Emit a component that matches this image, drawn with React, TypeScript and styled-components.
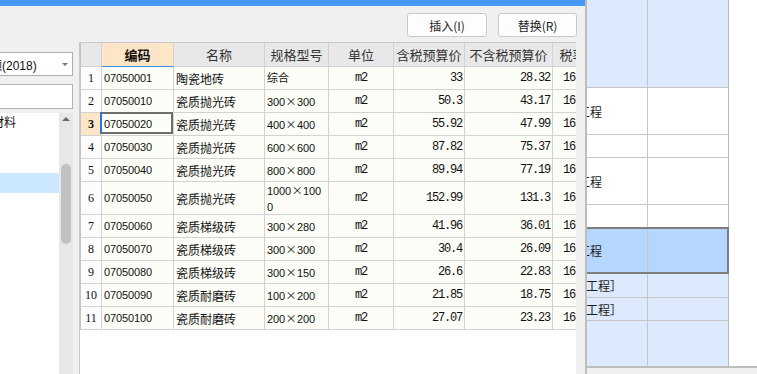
import React from 'react';
import styled, { createGlobalStyle, css } from 'styled-components';

const GlobalStyle = createGlobalStyle`
  html, body { margin: 0; padding: 0; }
  body {
    width: 757px;
    height: 374px;
    overflow: hidden;
    background: #ffffff;
    font-family: "Noto Sans CJK SC", "Liberation Sans", sans-serif;
  }
`;

const CJK = `"Noto Sans CJK SC", sans-serif`;
const SANS = `"Liberation Sans", "Noto Sans CJK SC", sans-serif`;
const MONO = `"Liberation Mono", "Noto Sans CJK SC", monospace`;

const Screen = styled.div`
  position: relative;
  width: 757px;
  height: 374px;
  overflow: hidden;
  background: #ffffff;
`;

/* ---------- background application (behind the dialog) ---------- */
const BackApp = styled.div`
  display: flex;
  flex-direction: column;
  height: 100%;
`;

const BackGrid = styled.div`
  display: flex;
  height: 366px;
  flex: none;
`;

const BackHidden = styled.div`
  width: 540px;
  flex: none;
`;

const BackTable = styled.div`
  width: 189px;
  flex: none;
  display: flex;
  flex-direction: column;
`;

type Tone = 'blue' | 'white' | 'sel';
const toneBg: Record<Tone, string> = { blue: '#dde9fc', white: '#ffffff', sel: '#b5d6fe' };

const BackRow = styled.div<{ $h: number; $tone: Tone; $line?: boolean }>`
  display: flex;
  box-sizing: border-box;
  height: ${p => p.$h}px;
  background: ${p => toneBg[p.$tone]};
  border-bottom: ${p => (p.$line ? '1px solid #c6c6c6' : 'none')};
  ${p =>
    p.$tone === 'sel' &&
    css`
      border-top: 2px solid #7d7d7d;
      border-bottom: 2px solid #7d7d7d;
      border-right: 2px solid #7d7d7d;
    `}
`;

const BackCellA = styled.div<{ $indent: number }>`
  width: 108px;
  box-sizing: border-box;
  border-right: 1px solid #c6c6c6;
  display: flex;
  align-items: center;
  padding-left: ${p => p.$indent}px;
  font: 12px ${CJK};
  color: #1b1b1b;
  white-space: nowrap;
  overflow: hidden;
`;

const BackCellB = styled.div<{ $last?: boolean }>`
  flex: 1;
  box-sizing: border-box;
  border-right: ${p => (p.$last ? 'none' : '1px solid #b9b9b9')};
`;

const BackStatus = styled.div`
  flex: 1;
  border-top: 2px solid #bdbdbd;
  background: #f0f0f0;
`;

/* ---------- dialog ---------- */
const Dialog = styled.div`
  position: absolute;
  top: 0;
  left: -130px;
  width: 717px;
  height: 400px;
  box-sizing: border-box;
  background: #f0f0f0;
  border-right: 2px solid #bdbdbd;
  display: flex;
  flex-direction: column;
`;

const TitleBar = styled.div`
  height: 6px;
  flex: none;
  background: #4599f5;
`;

const Toolbar = styled.div`
  height: 36px;
  flex: none;
  box-sizing: border-box;
  display: flex;
  justify-content: flex-end;
  align-items: flex-start;
  gap: 11px;
  padding: 7px 8px 0 0;
`;

const Button = styled.button<{ $w: number }>`
  width: ${p => p.$w}px;
  height: 24px;
  box-sizing: border-box;
  border: 1px solid #c9c9c9;
  border-radius: 3px;
  background: #fdfdfd;
  font: 12px ${CJK};
  color: #222;
  padding: 0;
  display: flex;
  align-items: center;
  justify-content: center;
`;

const Body = styled.div`
  flex: 1;
  display: flex;
  gap: 6px;
  padding-right: 9px;
  min-height: 0;
`;

const LeftPanel = styled.div`
  width: 203px;
  flex: none;
  display: flex;
  flex-direction: column;
`;

const Select = styled.div`
  margin-top: 10px;
  height: 24px;
  box-sizing: border-box;
  border: 1px solid #adadad;
  background: #fff;
  display: flex;
  align-items: center;
  padding-left: 11px;
  font: 12px ${SANS};
  color: #111;
  white-space: nowrap;
  overflow: hidden;
`;

const SelectText = styled.span`
  flex: 1;
  overflow: hidden;
`;

const Caret = styled.span`
  width: 0;
  height: 0;
  border-left: 3px solid transparent;
  border-right: 3px solid transparent;
  border-top: 3px solid #767676;
  margin: 0 4px 0 4px;
  flex: none;
`;

const SearchBox = styled.div`
  margin-top: 8px;
  height: 25px;
  box-sizing: border-box;
  border: 1px solid #b2b2b2;
  background: #fff;
`;

const ListWrap = styled.div`
  margin-top: 4px;
  flex: 1;
  display: flex;
  min-height: 0;
`;

const TreeList = styled.div`
  flex: 1;
  background: #fff;
  overflow: hidden;
`;

const TreeItem = styled.div<{ $indent: number; $selected?: boolean }>`
  height: 20px;
  line-height: 20px;
  padding-left: ${p => p.$indent}px;
  background: ${p => (p.$selected ? '#cce8ff' : 'transparent')};
  font: 12px ${CJK};
  color: #111;
  white-space: nowrap;
`;

const ScrollTrack = styled.div`
  width: 14px;
  flex: none;
  background: #e7e7e7;
  display: flex;
  flex-direction: column;
  align-items: center;
`;

const ScrollArrow = styled.span`
  margin-top: 4px;
  width: 0;
  height: 0;
  border-left: 4px solid transparent;
  border-right: 4px solid transparent;
  border-bottom: 4px solid #6a6a6a;
`;

const ScrollThumb = styled.div`
  margin-top: 43px;
  width: 10px;
  height: 80px;
  border-radius: 5px;
  background: #c1c1c1;
`;

const TablePanel = styled.div`
  width: 497px;
  flex: none;
  box-sizing: border-box;
  border-left: 1px solid #c9c9c9;
  border-top: 1px solid #c9c9c9;
  background: #ffffff;
  overflow: hidden;
`;

const COLS = '22px 72px 91px 64px 65px 71px 88px 40px';

const GridRow = styled.div<{ $h: number }>`
  display: grid;
  grid-template-columns: ${COLS};
  height: ${p => p.$h}px;
  width: 513px;
`;

const HeadCell = styled.div<{ $active?: boolean }>`
  box-sizing: border-box;
  border-right: 1px solid #d2d2d2;
  border-bottom: 1px solid ${p => (p.$active ? '#3d8ce4' : '#d2d2d2')};
  background: ${p => (p.$active ? '#fde5c8' : '#e8e8e8')};
  display: flex;
  align-items: center;
  justify-content: center;
  font: ${p => (p.$active ? 'bold' : 'normal')} 13px ${CJK};
  color: ${p => (p.$active ? '#111' : '#333')};
  white-space: nowrap;
  overflow: hidden;
`;

const NumCell = styled.div<{ $active?: boolean; $head?: boolean }>`
  box-sizing: border-box;
  border-left: 1px solid #c4c4c4;
  border-right: 1px solid #d2d2d2;
  border-bottom: 1px solid #d2d2d2;
  background: ${p => (p.$head ? '#e8e8e8' : p.$active ? '#fde5c8' : '#fcfcfc')};
  display: flex;
  align-items: center;
  justify-content: center;
  font: ${p => (p.$active ? 'bold' : 'normal')} 12px "Liberation Serif", serif;
  color: #111;
`;

type Align = 'left' | 'center' | 'right';
const justify: Record<Align, string> = { left: 'flex-start', center: 'center', right: 'flex-end' };

const Cell = styled.div<{ $align?: Align; $font?: 'cjk' | 'sans' | 'mono'; $selected?: boolean; $pad?: string }>`
  position: relative;
  box-sizing: border-box;
  border-right: 1px solid #d2d2d2;
  border-bottom: 1px solid #d2d2d2;
  background: #fdfdf8;
  display: flex;
  flex-direction: column;
  justify-content: center;
  align-items: ${p => justify[p.$align || 'left']};
  padding: ${p => p.$pad || '0 2px'};
  color: #111;
  white-space: nowrap;
  overflow: hidden;
  ${p =>
    p.$font === 'mono'
      ? css`font: 12px ${MONO}; letter-spacing: -1.2px;`
      : p.$font === 'sans'
      ? css`font: 11px ${SANS}; letter-spacing: -0.1px;`
      : css`font: 12px ${CJK};`}
  ${p =>
    p.$selected &&
    css`
      overflow: visible;
      &::after {
        content: '';
        position: absolute;
        top: -1px;
        left: -2px;
        right: 0;
        bottom: 1px;
        border: 2px solid #6e6e6e;
        border-left-color: #1f78ef;
      }
    `}
`;

const SpecLine = styled.span`
  line-height: 16px;
`;

const Times = styled.span`
  display: inline-block;
  width: 12px;
  text-align: center;
  font-family: ${CJK};
`;

type Item = {
  code: string;
  name: string;
  spec: string[];
  unit: string;
  tax: string;
  net: string;
  rate: string;
  h?: number;
};

const rows: Item[] = [
  { code: '07050001', name: '陶瓷地砖', spec: ['综合'], unit: 'm2', tax: '33', net: '28.32', rate: '16' },
  { code: '07050010', name: '瓷质抛光砖', spec: ['300×300'], unit: 'm2', tax: '50.3', net: '43.17', rate: '16' },
  { code: '07050020', name: '瓷质抛光砖', spec: ['400×400'], unit: 'm2', tax: '55.92', net: '47.99', rate: '16' },
  { code: '07050030', name: '瓷质抛光砖', spec: ['600×600'], unit: 'm2', tax: '87.82', net: '75.37', rate: '16' },
  { code: '07050040', name: '瓷质抛光砖', spec: ['800×800'], unit: 'm2', tax: '89.94', net: '77.19', rate: '16' },
  { code: '07050050', name: '瓷质抛光砖', spec: ['1000×100', '0'], unit: 'm2', tax: '152.99', net: '131.3', rate: '16', h: 33 },
  { code: '07050060', name: '瓷质梯级砖', spec: ['300×280'], unit: 'm2', tax: '41.96', net: '36.01', rate: '16' },
  { code: '07050070', name: '瓷质梯级砖', spec: ['300×300'], unit: 'm2', tax: '30.4', net: '26.09', rate: '16' },
  { code: '07050080', name: '瓷质梯级砖', spec: ['300×150'], unit: 'm2', tax: '26.6', net: '22.83', rate: '16' },
  { code: '07050090', name: '瓷质耐磨砖', spec: ['100×200'], unit: 'm2', tax: '21.85', net: '18.75', rate: '16' },
  { code: '07050100', name: '瓷质耐磨砖', spec: ['200×200'], unit: 'm2', tax: '27.07', net: '23.23', rate: '16' },
];

const headers = ['编码', '名称', '规格型号', '单位', '含税预算价', '不含税预算价', '税率'];

function renderSpec(line: string) {
  const parts = line.split('×');
  return parts.map((p, i) => (
    <React.Fragment key={i}>
      {i > 0 && <Times>×</Times>}
      {p}
    </React.Fragment>
  ));
}

const backRows: { h: number; tone: Tone; line?: boolean; text?: string; indent?: number }[] = [
  { h: 88, tone: 'blue', line: true },
  { h: 47, tone: 'white', line: true, text: '工程', indent: 38 },
  { h: 23, tone: 'white', line: true },
  { h: 47, tone: 'white', line: true, text: '工程', indent: 38 },
  { h: 22, tone: 'white' },
  { h: 47, tone: 'sel', text: '工程', indent: 38 },
  { h: 24, tone: 'blue', line: true, text: '工程］', indent: 46 },
  { h: 23, tone: 'blue', line: true, text: '工程］', indent: 46 },
  { h: 45, tone: 'blue' },
];

const treeItems = [
  { text: '建筑材料', indent: 98 },
  { text: '人工', indent: 14 },
  { text: '机械', indent: 14 },
  { text: '其他', indent: 26, selected: true },
];

export default function App() {
  return (
    <Screen>
      <GlobalStyle />
      <BackApp>
        <BackGrid>
          <BackHidden />
          <BackTable>
            {backRows.map((r, i) => (
              <BackRow key={i} $h={r.h} $tone={r.tone} $line={r.line}>
                <BackCellA $indent={r.indent || 0}>{r.text}</BackCellA>
                <BackCellB $last={r.tone === 'sel'} />
              </BackRow>
            ))}
          </BackTable>
        </BackGrid>
        <BackStatus />
      </BackApp>

      <Dialog>
        <TitleBar />
        <Toolbar>
          <Button $w={80}>插入(I)</Button>
          <Button $w={79}>替换(R)</Button>
        </Toolbar>
        <Body>
          <LeftPanel>
            <Select>
              <SelectText>江苏省建筑与装饰定额(2018)</SelectText>
              <Caret />
            </Select>
            <SearchBox />
            <ListWrap>
              <TreeList>
                {treeItems.map((t, i) => (
                  <TreeItem key={i} $indent={t.indent} $selected={t.selected}>
                    {t.text}
                  </TreeItem>
                ))}
              </TreeList>
              <ScrollTrack>
                <ScrollArrow />
                <ScrollThumb />
              </ScrollTrack>
            </ListWrap>
          </LeftPanel>

          <TablePanel>
            <GridRow $h={24}>
              <NumCell $head />
              {headers.map((h, i) => (
                <HeadCell key={h} $active={i === 0}>
                  {h}
                </HeadCell>
              ))}
            </GridRow>
            {rows.map((r, i) => (
              <GridRow key={r.code} $h={r.h || 23}>
                <NumCell $active={i === 2}>{i + 1}</NumCell>
                <Cell $font="sans" $selected={i === 2}>{r.code}</Cell>
                <Cell>{r.name}</Cell>
                <Cell $font="sans">
                  {r.spec.map((s, k) => (
                    <SpecLine key={k}>{renderSpec(s)}</SpecLine>
                  ))}
                </Cell>
                <Cell $font="mono" $align="center">{r.unit}</Cell>
                <Cell $font="mono" $align="right" $pad="0 2px 0 2px">{r.tax}</Cell>
                <Cell $font="mono" $align="right" $pad="0 2px 0 2px">{r.net}</Cell>
                <Cell $font="mono" $pad="0 0 0 10px">{r.rate}</Cell>
              </GridRow>
            ))}
          </TablePanel>
        </Body>
      </Dialog>
    </Screen>
  );
}
